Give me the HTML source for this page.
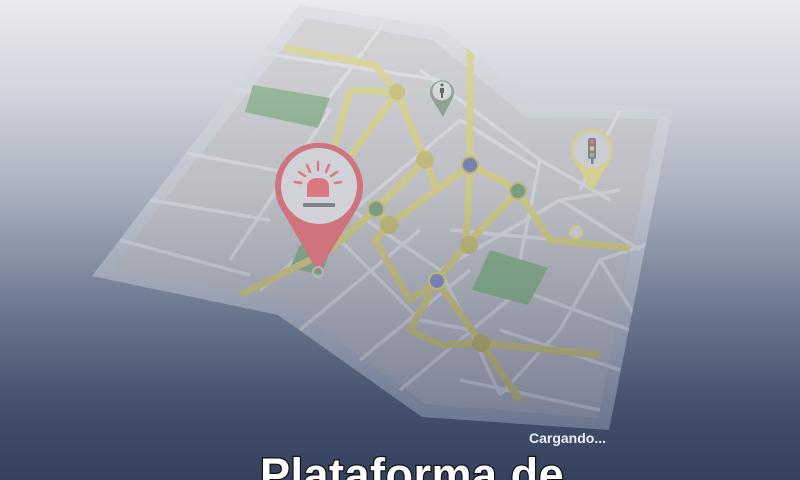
<!DOCTYPE html>
<html><head><meta charset="utf-8"><style>
html,body{margin:0;padding:0;width:800px;height:480px;overflow:hidden}
body{background:linear-gradient(180deg,#e9eaee 0%,#d2d6de 18%,#a9b0bf 40%,#6b778e 65%,#43506c 85%,#34425f 100%);position:relative;font-family:"Liberation Sans",sans-serif}
svg{position:absolute;left:0;top:0}
.c{position:absolute;left:529px;top:430px;font-size:14px;font-weight:bold;color:#eef0f4}
.t{position:absolute;left:260px;top:449px;font-size:45px;font-weight:bold;color:#fff;-webkit-text-stroke:2.5px #111;paint-order:stroke fill;letter-spacing:0.5px;white-space:nowrap}
</style></head><body>
<svg width="800" height="480" viewBox="0 0 800 480">
<defs>
<clipPath id="cp"><polygon points="299,5 440,27 536,103 673,107 609,430 422,417 278,315 92,276"/></clipPath>
<linearGradient id="bd" gradientUnits="userSpaceOnUse" x1="0" y1="0" x2="0" y2="430"><stop offset="0" stop-color="#e0e2e6"/><stop offset="0.45" stop-color="#bfc4cd"/><stop offset="1" stop-color="#6a7590"/></linearGradient>
<linearGradient id="in" gradientUnits="userSpaceOnUse" x1="0" y1="0" x2="0" y2="430"><stop offset="0" stop-color="#d8d8da"/><stop offset="0.45" stop-color="#bbbdc3"/><stop offset="1" stop-color="#777d92"/></linearGradient>
<linearGradient id="st" gradientUnits="userSpaceOnUse" x1="0" y1="0" x2="0" y2="430"><stop offset="0" stop-color="#e4e5e8"/><stop offset="0.45" stop-color="#ccced5"/><stop offset="1" stop-color="#8c93a6"/></linearGradient>
<linearGradient id="yl" gradientUnits="userSpaceOnUse" x1="0" y1="0" x2="0" y2="430"><stop offset="0" stop-color="#e0dca2"/><stop offset="0.45" stop-color="#cbc588"/><stop offset="1" stop-color="#888564"/></linearGradient>
<linearGradient id="yn" gradientUnits="userSpaceOnUse" x1="0" y1="0" x2="0" y2="430"><stop offset="0" stop-color="#d2cc8c"/><stop offset="0.45" stop-color="#bdb678"/><stop offset="1" stop-color="#7f7c5a"/></linearGradient>
<linearGradient id="gr" gradientUnits="userSpaceOnUse" x1="0" y1="0" x2="0" y2="430"><stop offset="0" stop-color="#a6c2a6"/><stop offset="0.45" stop-color="#86a88a"/><stop offset="1" stop-color="#648a76"/></linearGradient>
</defs>
<polygon points="299,5 440,27 536,103 673,107 609,430 422,417 278,315 92,276" fill="url(#bd)"/>
<g clip-path="url(#cp)">
<polygon points="306,18 433,40 527,118 658,119 598,418 426,404 282,300 112,268" fill="url(#in)"/>
<g stroke="url(#st)" stroke-width="3.5" fill="none">
<path d="M240,50 L440,80 M220,85 L330,110 M330,110 L230,260 M170,150 L300,175 M150,200 L270,220 M120,240 L250,275 M390,15 L320,110 M420,70 L540,160 L610,200 M300,175 L440,270 L470,330 M470,330 L500,395 M330,230 L420,320 L470,330 M260,290 L330,230 M330,230 L460,120 L540,170 M300,330 L420,230 M360,360 L470,270 M400,390 L520,290 M500,395 L560,330 M440,270 L560,200 L620,190 M560,200 L640,250 M520,290 L630,330 M500,330 L620,370 M460,380 L600,410 M560,330 L600,260 L660,240 M600,260 L650,340 M580,190 L620,110 M540,160 L520,260 M450,230 L560,240"/>
</g>
<polygon points="253,85 330,98 318,128 245,112" fill="url(#gr)"/>
<polygon points="490,250 548,268 528,305 472,290" fill="url(#gr)"/>
<polygon points="300,245 330,250 322,275 290,268" fill="url(#gr)"/>
<g stroke="url(#yl)" stroke-width="7" fill="none" stroke-linejoin="round">
<path d="M285,48 L375,65 L397,92 L425,160 L437,190"/>
<path d="M350,90 L397,92 M350,90 L330,165 L320,200"/>
<path d="M397,92 L340,170"/>
<path d="M470,35 L470,165 L466,245 L437,281 L410,330 L440,345 L481,343 L520,400"/>
<path d="M240,295 L330,250 L376,209 L425,160"/>
<path d="M376,209 L389,225 L470,165 L500,180 L518,191 L550,240 L630,248"/>
<path d="M518,191 L466,245"/>
<path d="M389,225 L375,240 L410,300 L437,281 M437,281 L481,343 L600,355"/>
</g>
<g fill="url(#yn)"><circle cx="397" cy="92" r="8"/><circle cx="425" cy="160" r="9"/><circle cx="389" cy="225" r="9"/><circle cx="469" cy="245" r="9"/><circle cx="481" cy="343" r="9"/></g>
<g fill="#7682b0" stroke="#bdb678" stroke-width="2"><circle cx="470" cy="165" r="8"/><circle cx="437" cy="281" r="8"/></g>
<g fill="#7a9c80" stroke="#bdb678" stroke-width="2"><circle cx="376" cy="209" r="8"/><circle cx="518" cy="191" r="8"/></g>
<circle cx="576" cy="232" r="6" fill="#c2c4cb" stroke="#cbc588" stroke-width="2"/>
</g>
<path d="M283,212 A44,44 0 1 1 355,212 L318,272 Z" fill="#cf737c"/>
<circle cx="319" cy="186" r="38" fill="#d0d2d8"/>
<circle cx="318" cy="272" r="5" fill="none" stroke="#b4b7c0" stroke-width="2"/>
<path d="M307,197 L307,187 Q307,178 318,178 Q329,178 329,187 L329,197 Z" fill="#dc7680"/>
<rect x="303" y="203" width="32" height="4" rx="1" fill="#7e828c"/>
<g stroke="#dc7680" stroke-width="2.5" stroke-linecap="round">
<path d="M318,162 L318,170 M307,165 L310,172 M329,165 L326,172 M299,172 L305,176 M337,172 L331,176 M295,182 L301,183 M341,182 L335,183"/>
</g>
<path d="M432,99 A12,12 0 1 1 452,99 L443,117 Z" fill="#8ea292"/>
<circle cx="442" cy="91" r="9.5" fill="#d6d8dc"/>
<circle cx="442" cy="85" r="1.5" fill="#666"/>
<path d="M440,88 h4 v5 h-1 v5 h-2 v-5 h-1 Z" fill="#666"/>
<path d="M575,162 A21,21 0 1 1 609,162 L592,192 Z" fill="#d4ce90"/>
<circle cx="592" cy="150" r="18" fill="#cacdd2"/>
<rect x="588" y="138" width="8" height="21" rx="2" fill="#80848e"/>
<rect x="591" y="159" width="2.5" height="5" fill="#80848e"/>
<circle cx="592" cy="142" r="2.3" fill="#dc7a82"/><circle cx="592" cy="148.5" r="2.3" fill="#d8d07c"/><circle cx="592" cy="155" r="2.3" fill="#8ebc8c"/>
</svg>
<div class="c">Cargando...</div>
<div class="t">Plataforma de</div>
</body></html>
